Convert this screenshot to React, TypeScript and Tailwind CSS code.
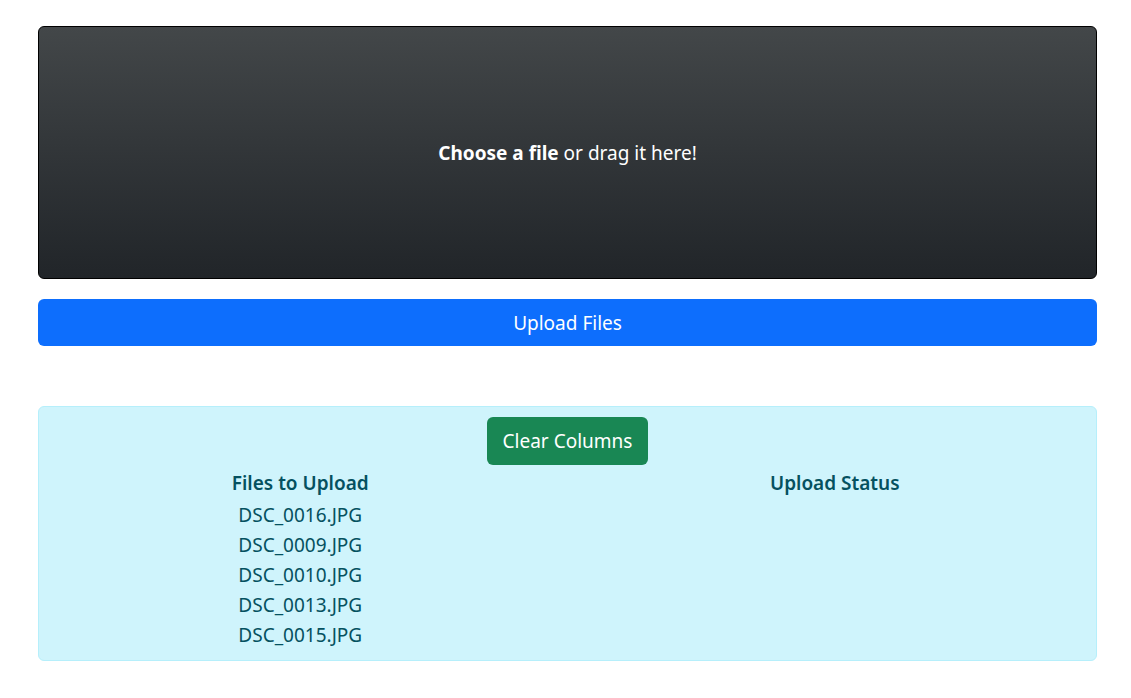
import React from 'react';

const files = ['DSC_0016.JPG', 'DSC_0009.JPG', 'DSC_0010.JPG', 'DSC_0013.JPG', 'DSC_0015.JPG'];

const App = () => {
  return (
    <div
      className="min-h-screen bg-white pl-[38px] pr-[34px] pt-[26px]"
      style={{ fontFamily: '"Noto Sans", "Open Sans", sans-serif' }}
    >
      <div className="flex h-[253px] items-center justify-center rounded-md border border-black bg-gradient-to-b from-[#434749] to-[#212529] pt-[2px] text-[19px] text-white">
        <span>
          <span className="font-bold">Choose a file</span> or drag it here!
        </span>
      </div>

      <button className="mt-[20px] block h-[47px] w-full rounded-md bg-[#0d6efd] pt-[2px] text-[19px] text-white">
        Upload Files
      </button>

      <div className="mt-[60px] rounded-md border border-[#b6effb] bg-[#cff4fc] px-4 pb-[10px] pt-[10px] text-[#055160]">
        <div className="flex justify-center">
          <button className="h-[48px] w-[161px] rounded-md bg-[#198754] pt-[1px] text-[19px] text-white">
            Clear Columns
          </button>
        </div>
        <div className="-mx-[22px] mt-[5px] grid grid-cols-2">
          <div className="flex flex-col items-center">
            <h5 className="text-[19px] font-semibold leading-[26px]">Files to Upload</h5>
            <div className="mt-[4px] flex flex-col items-center">
              {files.map((f) => (
                <p key={f} className="text-[19px] leading-[30px]">
                  {f}
                </p>
              ))}
            </div>
          </div>
          <div className="flex flex-col items-center">
            <h5 className="text-[19px] font-semibold leading-[26px]">Upload Status</h5>
          </div>
        </div>
      </div>
    </div>
  );
};

export default App;
